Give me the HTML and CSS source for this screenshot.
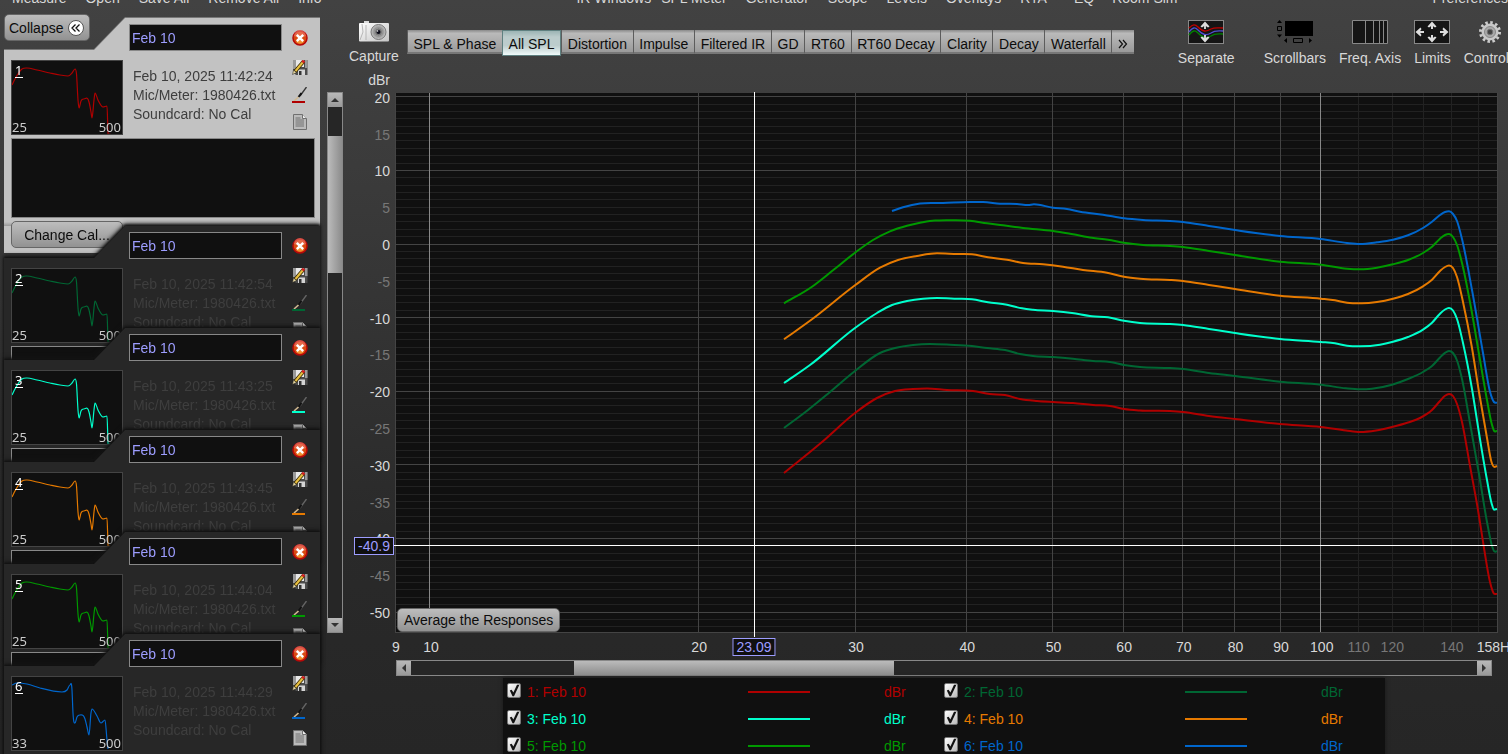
FILE: index.html
```html
<!DOCTYPE html>
<html lang="en">
<head>
  <meta charset="utf-8">
  <title>All SPL</title>
  <link rel="stylesheet" href="styles.css">
</head>
<body>
  <nav class="menu">
    <div class="menu-group">
      <button>Measure</button>
      <button>Open</button>
      <button>Save All</button>
      <button>Remove All</button>
      <button>Info</button>
    </div>
    <div class="menu-group">
      <button class="ir">IR Windows</button>
      <button>SPL Meter</button>
      <button>Generator</button>
      <button>Scope</button>
      <button>Levels</button>
      <button>Overlays</button>
      <button>RTA</button>
      <button class="eq">EQ</button>
      <button>Room Sim</button>
    </div>
    <div class="menu-group">
      <button>Preferences</button>
    </div>
  </nav>

  <div class="app">
    <aside class="sidebar">
      <button class="btn collapse">Collapse
        <svg width="16" height="16" viewBox="0 0 16 16"><circle cx="8" cy="8" r="7.5" fill="#fff" stroke="#555"/><path d="M7.5 4.5 4 8l3.500 3.500M11.500 4.500 8 8l3.500 3.500" fill="none" stroke="#111" stroke-width="1.300"/></svg>
      </button>
      <div id="cards"></div>
    </aside>

    <div class="scroll vertical">
      <button aria-label="Scroll up"><i class="arrow up"></i></button>
      <div class="before"></div>
      <div class="thumb"></div>
      <div class="after"></div>
      <button aria-label="Scroll down"><i class="arrow down"></i></button>
    </div>

    <main class="main">
      <div class="toolbar">
        <button class="tool capture">
          <svg width="30" height="22" viewBox="0 0 30 22">
            <defs>
              <linearGradient id="cam" x1="0" y1="0" x2="1" y2="1"><stop offset="0" stop-color="#fff"/><stop offset="1" stop-color="#c4c4c4"/></linearGradient>
              <radialGradient id="lens"><stop offset="0" stop-color="#333"/><stop offset=".35" stop-color="#777"/><stop offset="1" stop-color="#c8c8c8"/></radialGradient>
            </defs>
            <rect x="5" y="1" width="5" height="3" fill="#ddd"/>
            <rect x="0" y="3" width="30" height="18.500" rx="1" fill="url(#cam)"/>
            <path d="M1 20 4 12 3 4M7 5v15" fill="none" stroke="#aaa" stroke-width=".8"/>
            <circle cx="19.500" cy="12" r="7.500" fill="url(#lens)" stroke="#777"/>
            <circle cx="19.500" cy="12" r="4" fill="#777" stroke="#999"/>
            <circle cx="19.500" cy="12" r="2" fill="#0b0b18"/>
            <circle cx="18.500" cy="11" r=".8" fill="#eee"/>
          </svg>
          <span>Capture</span>
        </button>
        <div class="tabs">
          <button>SPL &amp; Phase</button>
          <button class="active">All SPL</button>
          <button>Distortion</button>
          <button>Impulse</button>
          <button>Filtered IR</button>
          <button>GD</button>
          <button>RT60</button>
          <button>RT60 Decay</button>
          <button>Clarity</button>
          <button>Decay</button>
          <button>Waterfall</button>
          <button aria-label="More graphs"><svg width="10" height="10" viewBox="0 0 10 10"><path d="M1 1l3.500 4L1 9M5 1l3.500 4L5 9" fill="none" stroke="#111" stroke-width="1.200"/></svg></button>
        </div>
        <div class="tools">
          <button class="tool separate">
            <svg width="36" height="24" viewBox="0 0 36 24">
              <rect x=".5" y=".5" width="35" height="23" fill="#151515" stroke="#888"/>
              <g fill="none" stroke-width="1.300">
                <path d="M1 8c4-4 6-4 9-1 5 5 8 5 13 2 4-2 8-1 12-1" stroke="#c00000"/>
                <path d="M1 12c4-5 6-5 9-2 5 5 8 6 13 3 4-3 8-2 12-2" stroke="#5050d0"/>
                <path d="M1 15c4-5 6-5 9-2 5 5 8 6 13 3 4-3 8-2 12-2" stroke="#008000"/>
              </g>
              <path d="M17 9V3M17 15v6" stroke="#ccc" stroke-width="2"/>
              <path d="M17 1.500l4.500 5-1.500 1-3-2-3 2-1.500-1zM17 22.500l4.500-5-1.500-1-3 2-3-2-1.500 1z" fill="#ddd"/>
            </svg>
            <span>Separate</span>
          </button>
          <button class="tool">
            <svg width="36" height="24" viewBox="0 0 36 24">
              <rect x="8" y="1" width="28" height="15"/>
              <path d="M0 3l2.500-3L5 3zM0 14.500l2.500 3 2.500-3zM10 18v5l-3-2.500zM32 18v5l3-2.500z"/>
              <path d="M.5 6.500h4v4h-4zM16.500 18.500h9v4h-9z" fill="none" stroke="#000"/>
            </svg>
            <span>Scrollbars</span>
          </button>
          <button class="tool">
            <svg width="36" height="24" viewBox="0 0 36 24"><path d="M.5.5h35v23H.5zM13.500 0v24M21.500 0v24M27.500 0v24M31.500 0v24" fill="#151515" stroke="#888"/></svg>
            <span>Freq. Axis</span>
          </button>
          <button class="tool">
            <svg width="36" height="24" viewBox="0 0 36 24">
              <rect x=".5" y=".5" width="35" height="23" fill="#151515" stroke="#888"/>
              <path d="M18 9V3M18 15v6M10 12H3M26 12h7" stroke="#ddd" stroke-width="2"/>
              <path d="M18 1.500l4.500 5-1.500 1-3-2-3 2-1.500-1zM18 22.500l4.500-5-1.500-1-3 2-3-2-1.500 1zM1.500 12l5-4.500 1 1.500-2 3 2 3-1 1.500zM34.500 12l-5-4.500-1 1.500 2 3-2 3 1 1.500z" fill="#ddd"/>
            </svg>
            <span>Limits</span>
          </button>
          <button class="tool">
            <svg width="24" height="24" viewBox="0 0 24 24">
              <circle cx="12" cy="12" r="9.500" fill="none" stroke="#ccc" stroke-width="3" stroke-dasharray="2.500 2.470"/>
              <circle cx="12" cy="12" r="8.500" fill="#c8c8c8"/>
              <circle cx="12" cy="12" r="5.500" fill="#aaa" stroke="#888"/>
              <circle cx="12" cy="12" r="2.800" fill="#444" stroke="#777"/>
            </svg>
            <span>Controls</span>
          </button>
        </div>
      </div>

      <div class="chart">
        <div class="unit">dBr</div>
        <div class="y-axis" id="yAxis"></div>
        <div class="plot">
          <svg id="plot" viewBox="0 0 1101 540" preserveAspectRatio="none"></svg>
          <button class="btn average">Average the Responses</button>
        </div>
        <div class="x-axis" id="xAxis"></div>
      </div>

      <div class="below">
        <div class="scroll horizontal">
          <button aria-label="Scroll left"><i class="arrow left"></i></button>
          <div class="before"></div>
          <div class="thumb"></div>
          <div class="after"></div>
          <button aria-label="Scroll right"><i class="arrow right"></i></button>
        </div>
        <div class="legend" id="legend"></div>
      </div>
    </main>
  </div>
  <script src="script.js"></script>
</body>
</html>
```
FILE: styles.css
```css
* {
  box-sizing: border-box;
}
body {
  margin: 0;
  height: 100vh;
  overflow: hidden;
  background: linear-gradient(#424242, #3a3a3a 25%, #2a2a2a 70%, #262626);
  color: #d8d8d8;
  font-family: "Liberation Sans", Arial, sans-serif;
  font-size: 14px;
  line-height: 16px;
}
button {
  font: inherit;
  color: inherit;
  background: none;
  border: none;
  padding: 0;
  white-space: nowrap;
}
svg {
  display: block;
}

/* menu bar */
.menu {
  display: flex;
  justify-content: space-between;
  align-items: flex-end;
  height: 6px;
  padding-left: 12px;
  overflow: hidden;
}
.menu-group {
  display: flex;
  gap: 19px;
}
.menu .ir {
  margin-right: -9px;
}
.menu .eq {
  margin: 0 -1px 0 8px;
}

.app {
  display: flex;
  align-items: flex-start;
}

/* measurement list */
.sidebar {
  flex: none;
  width: 316px;
  margin-left: 4px;
  padding-top: 8px;
}
.btn {
  border: 1px solid #666;
  border-radius: 5px;
  background: linear-gradient(#bdbdbd, #929292);
  color: #0c0c0c;
}
.collapse {
  display: flex;
  align-items: center;
  gap: 5px;
  height: 27px;
  padding: 0 5px 0 4px;
  margin-bottom: -23px;
}
.card {
  filter: drop-shadow(0 -1px 1px #111) drop-shadow(0 -1px 2px #151515);
  margin-top: -133px;
}
.card.selected {
  filter: drop-shadow(0 -1px 0 #777);
  margin-top: 0;
}
.card.selected + .card {
  margin-top: -27px;
}
.card-inner {
  height: 235px;
  padding: 6px 5px 5px 7px;
  background: #272727;
  clip-path: polygon(121px 0, 100% 0, 100% 100%, 0 100%, 0 32px, 90px 32px);
}
.selected .card-inner {
  background: linear-gradient(#c2c2c2 204px, #999 208px, #c2c2c2 208px);
}
.card-head {
  display: flex;
  align-items: center;
  gap: 10px;
  padding-left: 118px;
}
.card-head input {
  width: 153px;
  height: 27px;
  padding: 0 2px;
  border: 1px solid #888;
  background: #101010;
  color: #9d9dff;
  font: inherit;
}
.card-body {
  display: grid;
  grid-template-columns: 112px 1fr 16px;
  gap: 10px;
  margin-top: 9px;
  padding-right: 7px;
  height: 75px;
}
.thumbnail {
  border: 1px solid #444;
  background: #101010;
}
.thumbnail text {
  font-family: "Noto Sans", sans-serif;
  font-size: 13px;
  fill: #ccc;
}
.info {
  padding-top: 7px;
  line-height: 19px;
  color: #3e3e3e;
  white-space: nowrap;
  overflow: hidden;
}
.card-icons {
  display: flex;
  flex-direction: column;
  gap: 11px;
}
.notes {
  display: block;
  width: 100%;
  height: 80px;
  margin: 3px 0;
  border: 1px solid #888;
  background: #101010;
  color: #ccc;
  font: inherit;
  resize: none;
}
.change-cal {
  width: 112px;
  height: 27px;
}

/* scroll bars */
.scroll {
  display: flex;
  border: 1px solid #888;
  background: #262626;
}
.scroll button {
  display: flex;
  align-items: center;
  justify-content: center;
  flex: none;
  width: 14px;
  height: 14px;
  background: linear-gradient(#b8b8b8, #999);
}
.vertical {
  flex-direction: column;
  flex: none;
  width: 16px;
  height: calc(100vh - 213px);
  margin: 86px 0 0 7px;
}
.vertical .before { flex: 29; }
.vertical .thumb {
  flex: 137;
  background: linear-gradient(to right, #bbb, #8c8c8c);
}
.vertical .after { flex: 344; }
.horizontal {
  height: 16px;
}
.horizontal .before { flex: 163; }
.horizontal .thumb {
  flex: 320;
  background: linear-gradient(#bbb, #8c8c8c);
}
.horizontal .after { flex: 584; }
.arrow {
  border: 4px solid transparent;
}
.up { border-bottom-color: #333; margin-top: -4px; }
.down { border-top-color: #333; margin-bottom: -4px; }
.left { border-right-color: #333; margin-left: -4px; }
.right { border-left-color: #333; margin-right: -4px; }

.main {
  flex: 1;
  min-width: 0;
  overflow: hidden;
}

/* toolbar */
.toolbar {
  display: flex;
  align-items: flex-start;
  padding: 14px 0 0 6px;
  height: 60px;
}
.tool {
  display: flex;
  flex-direction: column;
  align-items: center;
  flex: none;
  gap: 6px;
}
.capture {
  margin-right: 8px;
}
.tabs {
  display: flex;
  flex: none;
  width: 727px;
  height: 24px;
  margin: 10px 44px 0 0;
}
.tabs button {
  display: flex;
  align-items: flex-start;
  justify-content: center;
  flex: 1 0 auto;
  padding: 6px 4px 0;
  border-left: 1px solid #5c5c5c;
  border-bottom: 2px solid #777;
  background: linear-gradient(#8a8a8a, #bababa 15%, #9a9a9a);
  color: #0c0c0c;
}
.tabs svg {
  margin-top: 3px;
}
.tabs .active {
  height: 26px;
  padding-top: 5px;
  border: 1px solid #5f8080;
  background: linear-gradient(#9cb4b4, #bccccc 25%, #bccccc 60%, #f0fafa);
}
.tools {
  display: flex;
  gap: 13px;
}
.separate {
  margin-right: 16px;
}

/* chart */
.chart {
  display: grid;
  grid-template-columns: 53px 1fr 11px;
  grid-template-rows: 16px calc(100vh - 214px) 16px;
  row-gap: 5px;
  margin-top: 6px;
}
.unit {
  text-align: right;
  padding-right: 6px;
}
.y-axis {
  grid-area: 2 / 1;
  position: relative;
}
.y-axis span {
  position: absolute;
  right: 6px;
  transform: translateY(-50%);
}
.plot {
  grid-area: 2 / 2;
  position: relative;
  min-width: 0;
  background: #101010;
}
.plot svg {
  width: 100%;
  height: 100%;
  overflow: visible;
}
.grid-line {
  stroke: #222;
  shape-rendering: crispEdges;
}
.grid-line.major { stroke: #444; }
.grid-line.decade { stroke: #888; }
.cursor {
  stroke: #fff;
  shape-rendering: crispEdges;
}
.trace {
  fill: none;
  stroke-width: 2;
  stroke-linejoin: round;
}
.average {
  position: absolute;
  left: 1px;
  bottom: 1px;
  height: 24px;
  padding: 0 6px;
}
.x-axis {
  grid-area: 3 / 2;
  position: relative;
  margin-top: 1px;
}
.x-axis span {
  position: absolute;
  transform: translateX(-50%);
}
.minor {
  color: #777;
}
.y-axis .readout,
.x-axis .readout {
  padding: 0 3px;
  border: 1px solid #9d9dff;
  background: #101010;
  color: #9d9dff;
}
.y-axis .readout {
  right: 2px;
}
.x-axis .readout {
  margin-top: -1px;
}

/* legend */
.below {
  margin: 6px 16px 0 53px;
}
.legend {
  display: grid;
  grid-template-columns: 1fr 1fr;
  width: 882px;
  max-width: 100%;
  margin: 2px auto 0;
  padding: 0 4px;
  background: #101010;
  box-shadow: 0 0 4px #181818;
}
.legend label {
  display: grid;
  grid-template-columns: 14px 1fr 62px 128px;
  gap: 6px;
  align-items: center;
  height: 27px;
}
.legend input {
  appearance: none;
  width: 14px;
  height: 15px;
  margin: 0 0 2px;
  border: 1px solid #777;
  border-radius: 2px;
  background: linear-gradient(135deg, #fff, #bbb);
}
.legend input:checked::before {
  content: "";
  display: block;
  height: 13px;
  background: #111;
  clip-path: polygon(15% 50%, 30% 45%, 45% 65%, 75% 5%, 95% 5%, 50% 95%, 38% 95%);
}
.line {
  height: 2px;
  background: currentColor;
}
.level {
  padding-left: 68px;
}
```
FILE: script.js
```js
// Traces are sampled on a 1101 x 540 plot whose origin is at ORIGIN
var ORIGIN = [396, 93];
var PLOT_W = 1101, PLOT_H = 540;
var F_MIN = 9.135, F_MAX = 157.3;

var THUMB = '0,24 3,18 10,8 15,7 25,9 38,12 48,14 56,15 60,12 63,8 64.5,13 66,39 67,47 69,40 72,38 77,41 79,51 80,57 82,39 83,32 86,39 91,46 95,45 96,71 98,73';
var THUMB_SHORT = '0,8 5,6 15,7 28,11 50,15 55,13 58,8 60,13 61,36 63,46 65,40 68,38 73,42 75,50 77,58 79,36 80,32 85,39 89,46 93,43 95,63 96,72';

var measurements = [
  { color: '#b00000', time: '11:42:24', from: 25, points: '784,473 822,442 855,413 877,398 895,391 913,389 927,388.5 947,390 973,391 990,394 1005,395 1020,399 1037,401 1053,402 1073,403 1093,405 1110,406 1124,409 1140,410.5 1170,411 1183,412 1209,416 1235,419 1280,424 1321,427 1346,430.5 1360,432 1376,430.5 1392,427 1408,422.5 1420,418 1432,410 1440,401 1445,395.8 1449,394 1453,396 1457,404 1462,422 1470,466 1478,510 1484,548 1490,582 1493.5,593 1497,594' },
  { color: '#006633', time: '11:42:54', from: 25, points: '784,428 808,410 830,392 855,371 880,353 895,348 913,345 930,344 950,344.7 972,346 987,348 1005,350 1020,354 1033,356 1053,357 1073,358.7 1093,361 1110,362 1124,365 1140,367 1170,368 1183,369 1209,373 1235,376 1280,381.7 1321,384.7 1346,388.3 1360,389.3 1372,388.7 1392,384.7 1408,379 1423,372 1432,366 1440,357.5 1445,352.8 1449,351 1453,353 1457,360.5 1462,379 1470,423 1479,474 1487,522 1492,546 1494,551 1497,551.3' },
  { color: '#00ffcc', time: '11:43:25', from: 25, points: '784,383 810,365 855,328 877,313 892,305 907,301 923,298.7 937,298 957,298.7 972,299.3 988,302.3 1007,304.7 1022,308.3 1033,309.7 1053,311 1072,313 1092,316.3 1108,317.3 1124,320.7 1140,323 1170,324 1183,325 1209,329 1235,333 1280,339 1321,342 1335,343.3 1347,345.7 1360,346.3 1380,344.7 1393,341.7 1408,337 1423,329.7 1432,322.7 1440,313.7 1445,309.5 1449,308 1453,310.5 1457,319 1463,343 1472,389 1479,433 1487,480 1491.5,503 1494,509.7 1497,509' },
  { color: '#e67a00', time: '11:43:45', from: 25, points: '784,339.3 812,319.3 855,285.3 880,267.7 898,260 917,256 937,253.3 957,254 972,254.3 988,257.3 1007,259.7 1023,263 1043,264.3 1063,266.7 1083,270 1107,272.7 1124,276.7 1140,278.7 1170,280 1183,281 1209,285 1235,289 1280,295.7 1321,298.7 1335,300.3 1347,302.7 1362,303.3 1377,302 1393,298.7 1408,294 1423,286.3 1432,279.7 1440,271 1445,267 1449,265.5 1453,268 1457,277 1463,302 1472,348 1479,392 1487,438 1491.5,462 1494.5,467 1497,466' },
  { color: '#009900', time: '11:44:04', from: 25, points: '784,303.3 812,286.7 833,270.3 855,252.7 873,240 890,231.3 907,225.7 920,222.7 935,220.5 970,220.7 987,223.3 1003,225.3 1023,228 1053,231 1073,234.3 1092,237.7 1108,239.7 1124,242.7 1143,245 1170,246 1183,247 1209,251 1235,255 1280,261.7 1321,264.7 1347,268.7 1360,269.3 1377,267.7 1393,264.3 1408,260 1423,253 1432,246.7 1440,238.7 1445,235 1449,234 1453,237 1457,245 1462,263 1472,313 1479,354 1487,400 1491.5,423 1494,430.7 1497,431' },
  { color: '#0066cc', time: '11:44:29', from: 33, points: '892,211 903,207.3 920,203.5 943,203 970,202 983,202 1000,203.7 1017,204 1028,205 1034,204.3 1053,207.7 1067,209 1080,211.7 1103,214.7 1124,218.3 1143,220 1170,221 1183,222 1209,226 1235,230 1280,236 1321,239 1347,243 1360,244 1377,242.3 1393,239.7 1408,235.3 1423,228 1432,221.7 1440,215 1445,212 1449,211.3 1453,214 1457,221 1462,239 1472,290 1483,353 1490,391.7 1494,402 1497,402.7' }
];

function freqToX(f) {
  var x = Math.log(f / F_MIN) / Math.log(F_MAX / F_MIN) * PLOT_W;
  return Math.max(0, Math.min(PLOT_W, x));
}

function dbToY(db) {
  return 152 - db * 7.36;
}

// Smooth curve through unevenly spaced points
function smoothPath(text, origin) {
  var p = text.split(' ').map(function (s) {
    var xy = s.split(',');
    return [xy[0] - origin[0], xy[1] - origin[1]];
  });
  var slopes = [];
  for (var i = 0; i < p.length - 1; i++) {
    slopes.push((p[i + 1][1] - p[i][1]) / (p[i + 1][0] - p[i][0]));
  }
  var tangents = p.map(function (pt, i) {
    if (i === 0) return slopes[0];
    if (i === p.length - 1) return slopes[i - 1];
    // flat at peaks and dips
    if (slopes[i - 1] * slopes[i] <= 0) return 0;
    var h1 = pt[0] - p[i - 1][0], h2 = p[i + 1][0] - pt[0];
    return (h1 * slopes[i] + h2 * slopes[i - 1]) / (h1 + h2);
  });
  var d = 'M' + p[0];
  for (i = 0; i < p.length - 1; i++) {
    var a = p[i], b = p[i + 1], w = (b[0] - a[0]) / 3;
    d += 'C' + [a[0] + w, a[1] + tangents[i] * w, b[0] - w, b[1] - tangents[i + 1] * w, b[0], b[1]].join(' ');
  }
  return d;
}

function gridLine(x1, y1, x2, y2, cls) {
  return '<line class="' + cls + '" x1="' + x1 + '" y1="' + y1 + '" x2="' + x2 + '" y2="' + y2 + '"/>';
}

function drawPlot() {
  var svg = '', yLabels = '', xLabels = '', x, y;

  for (var f = 110; f <= 150; f += 10) {
    x = Math.floor(freqToX(f)) + 0.5;
    svg += gridLine(x, 0, x, PLOT_H, 'grid-line');
  }
  for (var db = 20; db >= -52; db--) {
    y = Math.floor(dbToY(db)) - 0.5;
    svg += gridLine(0, y, PLOT_W, y, db % 10 ? 'grid-line' : 'grid-line major');
    if (db % 5 === 0) {
      yLabels += '<span class="' + (db % 10 ? 'minor' : '') + '" style="top:' + (dbToY(db) / PLOT_H * 100) + '%">' + db + '</span>';
    }
  }
  for (f = 10; f <= 100; f += 10) {
    x = Math.floor(freqToX(f)) - 0.5;
    svg += gridLine(x, 0, x, PLOT_H, f % 90 === 10 ? 'grid-line decade' : 'grid-line major');
  }
  svg += gridLine(-0.5, 0, -0.5, PLOT_H, 'grid-line major');
  svg += gridLine(PLOT_W + 0.5, 0, PLOT_W + 0.5, PLOT_H, 'grid-line major');
  svg += gridLine(0, PLOT_H - 0.5, PLOT_W, PLOT_H - 0.5, 'grid-line major');

  measurements.forEach(function (m) {
    svg += '<path class="trace" stroke="' + m.color + '" d="' + smoothPath(m.points, ORIGIN) + '"/>';
  });

  svg += gridLine(358.5, -1, 358.5, 544, 'cursor');
  svg += gridLine(-2, 452.5, PLOT_W, 452.5, 'cursor');
  document.getElementById('plot').innerHTML = svg;

  yLabels += '<span class="readout" style="top:' + (452.5 / PLOT_H * 100) + '%">-40.9</span>';
  document.getElementById('yAxis').innerHTML = yLabels;

  [9, 10, 20, 30, 40, 50, 60, 70, 80, 90, 100, 110, 120, 140, 158].forEach(function (f) {
    var cls = f > 100 && f < 158 ? 'minor' : '';
    xLabels += '<span class="' + cls + '" style="left:' + (freqToX(f) / PLOT_W * 100) + '%">' + f + (f === 158 ? 'Hz' : '') + '</span>';
  });
  xLabels += '<span class="readout" style="left:' + (358 / PLOT_W * 100) + '%">23.09</span>';
  document.getElementById('xAxis').innerHTML = xLabels;
}

var closeIcon = '<svg width="16" height="16" viewBox="0 0 16 16"><circle cx="8" cy="8" r="7" fill="#d84a10" stroke="#b80808" stroke-width="1.5"/><path d="M4 12q4 3.500 8 0l-4-4z" fill="#f09030"/><path d="M2 6a6 6 0 0 1 12 0q-6 3-12 0z" fill="#f08070" opacity=".6"/><path d="M4.800 4.800l6.400 6.400M11.200 4.800l-6.400 6.400" stroke="#fff" stroke-width="2.400"/></svg>';
var saveIcon = '<svg width="16" height="16" viewBox="0 0 16 16"><path d="M1 0h14.500v15H4l-3-3z" fill="#4c4c4c"/><path d="M1 0h3v9H1zM13 0h2.500v8H13z" fill="#999"/><path d="M4 0h8v7H4z" fill="#e8e8e8"/><path d="M6 9.500h7v5.500H6z" fill="#d4d4d4"/><path d="M7 11h2.500v4H7z" fill="#333"/><path d="M11.500 1.500L3 11.500" stroke="#3a2a00" stroke-width="3.600"/><path d="M11 2L3.500 11" stroke="#e8c040" stroke-width="2"/><path d="M10.500 2.500l1.500-2" stroke="#d02020" stroke-width="3"/><path d="M.5 14.500l1-4.500 3 2.500z" fill="#e8d8a0" stroke="#222" stroke-width=".5"/></svg>';
var docIcon = '<svg width="16" height="16" viewBox="0 0 16 16"><path d="M1.500.5h9l4 4v11h-13z" fill="#bbb" stroke="#707070"/><path d="M10.500.5v4h4" fill="#eee" stroke="#707070"/><path d="M3.500 4h5M3.500 6h8.500M3.500 8h8.500M3.500 10h8.500M3.500 12h8.500" stroke="#707070"/></svg>';

function penIcon(color, selected) {
  return '<svg width="16" height="16" viewBox="0 0 16 16"><path d="M14.500 0L8 9" stroke="' + (selected ? '#333' : '#666') + '" stroke-width="1.300"/><path d="M9.500 6L6.500 10" stroke="#111" stroke-width="2"/><path d="M6.500 10L2 14" stroke="#d0b890" stroke-width="1.600"/><path d="M0 14h13v2H0z" fill="' + color + '"/></svg>';
}

function cardHtml(m, i) {
  var n = i + 1;
  return '<section class="card' + (i === 0 ? ' selected' : '') + '"><div class="card-inner">' +
    '<div class="card-head"><input type="text" value="Feb 10" aria-label="Name of measurement ' + n + '"><button aria-label="Remove">' + closeIcon + '</button></div>' +
    '<div class="card-body">' +
    '<svg class="thumbnail" width="112" height="75" viewBox="0 0 110 73">' +
    '<path d="' + smoothPath(m.from === 33 ? THUMB_SHORT : THUMB, [0, 0]) + '" fill="none" stroke="' + m.color + '" stroke-width="1.200"/>' +
    '<text x="3" y="14" style="fill:#fff">' + n + '</text><path d="M3 16.500h8" stroke="#fff"/>' +
    '<text x="0" y="71">' + m.from + '</text><text x="109" y="71" text-anchor="end">500</text></svg>' +
    '<div class="info">Feb 10, 2025 ' + m.time + '<br>Mic/Meter: 1980426.txt<br>Soundcard: No Cal</div>' +
    '<div class="card-icons"><button aria-label="Save">' + saveIcon + '</button><button aria-label="Trace colour">' + penIcon(m.color, i === 0) + '</button><button aria-label="Notes">' + docIcon + '</button></div>' +
    '</div>' +
    '<textarea class="notes" aria-label="Notes"></textarea>' +
    '<button class="btn change-cal">Change Cal...</button>' +
    '</div></section>';
}

function legendHtml(m, i) {
  return '<label style="color:' + m.color + '"><input type="checkbox" checked><span>' + (i + 1) + ': Feb 10</span><span class="line"></span><span class="level">dBr</span></label>';
}

drawPlot();
document.getElementById('cards').innerHTML = measurements.map(cardHtml).join('');
document.getElementById('legend').innerHTML = measurements.map(legendHtml).join('');
```
